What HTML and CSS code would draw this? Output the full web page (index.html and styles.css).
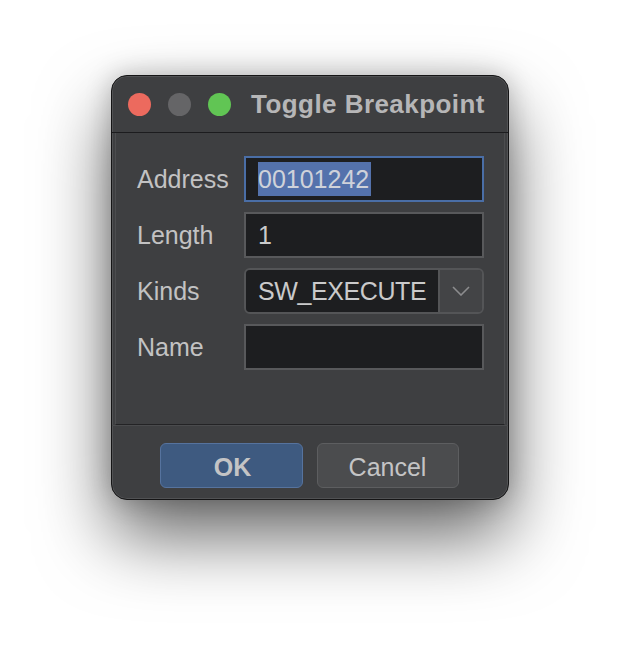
FILE: index.html
```html
<!DOCTYPE html>
<html>
<head>
<meta charset="utf-8">
<link rel="stylesheet" href="styles.css">
</head>
<body>
<div class="window">
  <div class="titlebar">
    <span class="light red"></span>
    <span class="light gray"></span>
    <span class="light green"></span>
    <span class="title">Toggle Breakpoint</span>
  </div>
  <div class="panel">
    <div class="form">
      <label class="label">Address</label>
      <div class="field focused"><span class="sel">00101242</span></div>
      <label class="label">Length</label>
      <div class="field">1</div>
      <label class="label">Kinds</label>
      <div class="combo">
        <div class="combo-value">SW_EXECUTE</div>
        <div class="combo-btn">
          <svg width="18" height="10" viewBox="0 0 18 10"><path d="M1 1 L9 9 L17 1" fill="none" stroke="#8c8c8e" stroke-width="1.6"/></svg>
        </div>
      </div>
      <label class="label">Name</label>
      <div class="field"></div>
    </div>
  </div>
  <div class="footer">
    <button class="btn ok">OK</button>
    <button class="btn cancel">Cancel</button>
  </div>
</div>
</body>
</html>
```

FILE: styles.css
```css
html, body {
  margin: 0;
  padding: 0;
  background: #ffffff;
}
html {
  min-height: 648px;
}
body {
  box-sizing: border-box;
  min-height: 648px;
  padding-top: 75px;
  font-family: "Liberation Sans", Arial, sans-serif;
}
.window {
  box-sizing: border-box;
  margin-left: 111px;
  width: 398px;
  height: 425px;
  background: #3e3f41;
  border: 1px solid #151516;
  border-radius: 16px;
  box-shadow: inset 0 0 0 1px rgba(255,255,255,0.10), 0 36px 72px 0 rgba(0,0,0,0.6), 0 0 26px rgba(0,0,0,0.22);
  display: flex;
  flex-direction: column;
  overflow: hidden;
}
.titlebar {
  height: 56px;
  flex: none;
  display: flex;
  align-items: center;
  padding-left: 16px;
  gap: 17px;
  border-bottom: 1px solid #1c1c1e;
}
.light {
  width: 23px;
  height: 23px;
  border-radius: 50%;
  flex: none;
}
.red { background: #ec6a5e; }
.gray { background: #656567; }
.green { background: #61c554; }
.title {
  margin-left: 3px;
  font-weight: bold;
  font-size: 26px;
  color: #b6b6b7;
  letter-spacing: 0.45px;
}
.panel {
  height: 291px;
  flex: none;
  margin: 0 3px;
  border-left: 1px solid #4c4d4f;
  border-right: 1px solid #4c4d4f;
  border-bottom: 1px solid #232325;
  box-sizing: content-box;
  background: #3e3f41;
}
.form {
  display: grid;
  grid-template-columns: 107px 240px;
  grid-auto-rows: 46px;
  row-gap: 10px;
  padding: 23px 0 0 21px;
}
.label {
  display: flex;
  align-items: center;
  font-size: 25px;
  color: #c2c2c3;
}
.field {
  box-sizing: border-box;
  background: #1d1e20;
  border: 2px solid #58595b;
  display: flex;
  align-items: center;
  padding-left: 12px;
  font-size: 25px;
  color: #cacacb;
}
.field.focused {
  border-color: #4a6ea6;
}
.sel {
  display: inline-block;
  background: #5472ac;
  line-height: 34px;
  color: #cfd2da;
  padding-right: 2px;
}
.combo {
  box-sizing: border-box;
  display: flex;
  border: 2px solid #545557;
  border-radius: 6px;
  overflow: hidden;
}
.combo-value {
  flex: 1;
  background: #1d1e20;
  display: flex;
  align-items: center;
  padding-left: 12px;
  font-size: 25px;
  letter-spacing: -0.4px;
  color: #cacacb;
}
.combo-btn {
  width: 42px;
  flex: none;
  background: #434446;
  border-left: 2px solid #545557;
  display: flex;
  align-items: center;
  justify-content: center;
  padding-bottom: 1px;
}
.footer {
  flex: 1;
  border-top: 1px solid #4a4b4d;
  display: flex;
  justify-content: center;
  align-items: flex-start;
  gap: 14px;
  padding-top: 17px;
  padding-right: 2px;
}
.btn {
  box-sizing: border-box;
  height: 45px;
  border-radius: 6px;
  font-family: "Liberation Sans", Arial, sans-serif;
  font-size: 25px;
  color: #c4c4c5;
  padding: 3px 0 0 0;
}
.ok {
  width: 143px;
  background: #3e5a80;
  border: 1.5px solid #56739e;
  font-weight: bold;
  padding-left: 3px;
}
.cancel {
  width: 142px;
  background: #4b4c4e;
  border: 1.5px solid #5d5e60;
}
```
